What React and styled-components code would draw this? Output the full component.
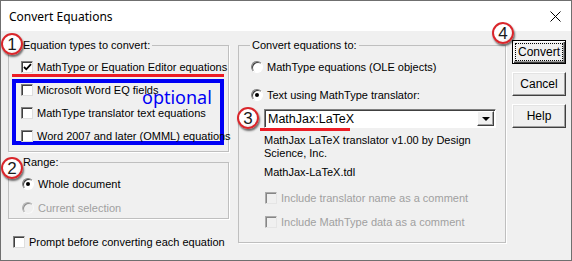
import React from 'react';
import styled, { createGlobalStyle } from 'styled-components';

const GlobalStyle = createGlobalStyle`
  html, body {
    margin: 0;
    padding: 0;
    background: #fff;
  }
  body {
    font-family: 'Liberation Sans', Arial, sans-serif;
    font-size: 11px;
    color: #000;
  }
  * {
    box-sizing: border-box;
  }
`;

const Window = styled.div`
  position: relative;
  width: 572px;
  height: 261px;
  border: 1px solid #6f6f6f;
  display: flex;
  flex-direction: column;
  overflow: hidden;
`;

const TitleBar = styled.div`
  flex: none;
  height: 30px;
  background: #fff;
  display: flex;
  align-items: center;
  justify-content: space-between;
  padding: 0 10px 0 8px;
  font-family: 'Noto Sans', sans-serif;
  font-size: 12px;
`;

const Body = styled.div`
  flex: 1;
  background: #f0f0f0;
  display: flex;
  align-items: flex-start;
  padding: 8px 0 0 7px;
`;

const LeftCol = styled.div`
  width: 221px;
  display: flex;
  flex-direction: column;
`;

const Group = styled.fieldset`
  margin: ${(p) => p.$margin || '0'};
  padding: 0;
  min-width: 0;
  width: ${(p) => p.$width}px;
  border: 1px solid #bfbfbf;
  box-shadow: 1px 1px 0 #fff;
`;

const Legend = styled.legend`
  margin-left: ${(p) => p.$indent}px;
  padding: 0 2px;
  line-height: 13px;
`;

const GroupBody = styled.div`
  display: flex;
  flex-direction: column;
  padding: ${(p) => p.$pad};
`;

const Row = styled.div`
  display: flex;
  align-items: center;
  gap: 4px;
  height: 14px;
  white-space: nowrap;
  margin: ${(p) => p.$margin || '0'};
  color: ${(p) => (p.$disabled ? '#a0a0a0' : '#000')};
`;

const CheckBox = styled.span`
  flex: none;
  width: 12px;
  height: 12px;
  border: 1px solid;
  border-color: #808080 #dedede #dedede #808080;
  box-shadow: inset 1px 1px 0 #404040;
  background: ${(p) => (p.$disabled ? '#f0f0f0' : '#fff')};
  display: flex;
  align-items: center;
  justify-content: center;
  opacity: ${(p) => (p.$disabled ? 0.6 : 1)};
`;

const Radio = styled.span`
  flex: none;
  width: 12px;
  height: 12px;
  border-radius: 50%;
  border: 1px solid;
  border-color: #808080 #fff #fff #808080;
  box-shadow: inset 1px 1px 0 #404040;
  background: ${(p) => (p.$disabled ? '#f0f0f0' : '#fff')};
  opacity: ${(p) => (p.$disabled ? 0.55 : 1)};
  display: flex;
  align-items: center;
  justify-content: center;

  &::after {
    content: '';
    display: ${(p) => (p.$checked ? 'block' : 'none')};
    width: 4px;
    height: 4px;
    border-radius: 50%;
    background: #000;
  }
`;

const RedMark = styled.div`
  height: 3px;
  width: ${(p) => p.$width};
  margin: ${(p) => p.$margin || '0'};
  background: #ec1c24;
`;

const BlueBox = styled.div`
  position: relative;
  margin-top: 2px;
  border: 4px solid #0000f5;
  padding: 0 0 0 5px;
  display: flex;
  flex-direction: column;
  gap: 11px;
  height: 66px;
`;

const Optional = styled.span`
  position: absolute;
  left: 126px;
  top: 3px;
  font-family: 'Noto Sans', sans-serif;
  font-size: 18px;
  line-height: 22px;
  color: #0000f5;
`;

const Select = styled.div`
  width: 232px;
  height: 19px;
  margin: 7px 0 0 13px;
  display: flex;
  align-items: center;
  justify-content: space-between;
  background: #fff;
  border: 1px solid;
  border-color: #808080 #fff #fff #808080;
  box-shadow: inset 1px 1px 0 #404040;
  padding: 0 1px 0 3px;
  font-size: 12.5px;
`;

const DropButton = styled.span`
  width: 17px;
  height: 15px;
  background: #f0f0f0;
  border: 1px solid;
  border-color: #fff #404040 #404040 #fff;
  box-shadow: inset -1px -1px 0 #a0a0a0;
  display: flex;
  align-items: center;
  justify-content: center;

  &::after {
    content: '';
    border-left: 4px solid transparent;
    border-right: 4px solid transparent;
    border-top: 4px solid #000;
    margin-top: 1px;
  }
`;

const Info = styled.div`
  width: 232px;
  margin: ${(p) => p.$margin};
  line-height: 13px;
`;

const ButtonCol = styled.div`
  display: flex;
  flex-direction: column;
  gap: 8px;
  margin: 1px 0 0 6px;
`;

const Button = styled.button`
  width: 54px;
  height: 24px;
  padding: 0;
  font-family: 'Liberation Sans', Arial, sans-serif;
  font-size: 12px;
  color: #000;
  background: #f0f0f0;
  border: 1px solid;
  border-color: ${(p) => (p.$default ? '#000' : '#fff #404040 #404040 #fff')};
  box-shadow: ${(p) =>
    p.$default
      ? 'inset 1px 1px 0 #fff, inset -1px -1px 0 #404040, inset -2px -2px 0 #a0a0a0'
      : 'inset -1px -1px 0 #a0a0a0, inset 1px 1px 0 #e3e3e3'};
  display: flex;
  align-items: center;
  justify-content: center;
`;

const Focus = styled.span`
  outline: 1px dotted #000;
  outline-offset: 1px;
  padding: 0 1px;
`;

const Badge = styled.div`
  position: absolute;
  left: ${(p) => p.$x}px;
  top: ${(p) => p.$y}px;
  width: 22px;
  height: 22px;
  border-radius: 50%;
  border: 2px solid #d9262b;
  background: radial-gradient(circle at 40% 35%, #fff 0 55%, #dcdcdc 100%);
  box-shadow: 1px 2px 2px rgba(0, 0, 0, 0.55);
  display: flex;
  align-items: center;
  justify-content: center;
  font-family: 'Liberation Sans', Arial, sans-serif;
  font-size: 17px;
  color: #1a1a1a;
  line-height: 1;
`;

const Check = () => (
  <svg width="9" height="8" viewBox="0 0 9 8">
    <polyline points="1,4 3.3,6.3 8,1.2" fill="none" stroke="#000" strokeWidth="1.8" />
  </svg>
);

const CheckRow = ({ checked, disabled, children, margin }) => (
  <Row $disabled={disabled} $margin={margin}>
    <CheckBox $disabled={disabled}>{checked && <Check />}</CheckBox>
    <span>{children}</span>
  </Row>
);

const RadioRow = ({ checked, disabled, children, margin }) => (
  <Row $disabled={disabled} $margin={margin}>
    <Radio $checked={checked} $disabled={disabled} />
    <span>{children}</span>
  </Row>
);

export default function App() {
  return (
    <>
      <GlobalStyle />
      <Window>
        <TitleBar>
          <span>Convert Equations</span>
          <svg width="11" height="11" viewBox="0 0 11 11">
            <path d="M0.5 0.5 L10.5 10.5 M10.5 0.5 L0.5 10.5" stroke="#000" strokeWidth="1" />
          </svg>
        </TitleBar>
        <Body>
          <LeftCol>
            <Group $width={221}>
              <Legend $indent={12}>Equation types to convert:</Legend>
              <GroupBody $pad="8px 4px 6px 3px">
                <CheckRow checked margin="0 0 0 9px">
                  MathType or Equation Editor equations
                </CheckRow>
                <RedMark $width="100%" />
                <BlueBox>
                  <CheckRow margin="1px 0 0">Microsoft Word EQ fields</CheckRow>
                  <CheckRow>MathType translator text equations</CheckRow>
                  <CheckRow>Word 2007 and later (OMML) equations</CheckRow>
                  <Optional>optional</Optional>
                </BlueBox>
              </GroupBody>
            </Group>
            <Group $width={221} $margin="4px 0 0">
              <Legend $indent={12}>Range:</Legend>
              <GroupBody $pad="8px 0 3px 13px">
                <RadioRow checked>Whole document</RadioRow>
                <RadioRow disabled margin="10px 0 0">
                  Current selection
                </RadioRow>
              </GroupBody>
            </Group>
            <CheckRow margin="16px 0 0 5px">Prompt before converting each equation</CheckRow>
          </LeftCol>

          <Group $width={268} $margin="0 0 0 9px">
            <Legend $indent={11}>Convert equations to:</Legend>
            <GroupBody $pad="8px 0 13px 12px">
              <RadioRow>MathType equations (OLE objects)</RadioRow>
              <RadioRow checked margin="14px 0 0">
                Text using MathType translator:
              </RadioRow>
              <Select>
                <span>MathJax:LaTeX</span>
                <DropButton />
              </Select>
              <RedMark $width="90px" $margin="0 0 0 9px" />
              <Info $margin="3px 0 0 13px">MathJax LaTeX translator v1.00 by Design Science, Inc.</Info>
              <Info $margin="6px 0 0 13px">MathJax-LaTeX.tdl</Info>
              <CheckRow disabled margin="12px 0 0 14px">
                Include translator name as a comment
              </CheckRow>
              <CheckRow disabled margin="10px 0 0 14px">
                Include MathType data as a comment
              </CheckRow>
            </GroupBody>
          </Group>

          <ButtonCol>
            <Button $default>
              <Focus>Convert</Focus>
            </Button>
            <Button>Cancel</Button>
            <Button>Help</Button>
          </ButtonCol>
        </Body>
        <Badge $x={0} $y={32}>1</Badge>
        <Badge $x={0} $y={156}>2</Badge>
        <Badge $x={236} $y={106}>3</Badge>
        <Badge $x={491} $y={21}>4</Badge>
      </Window>
    </>
  );
}
